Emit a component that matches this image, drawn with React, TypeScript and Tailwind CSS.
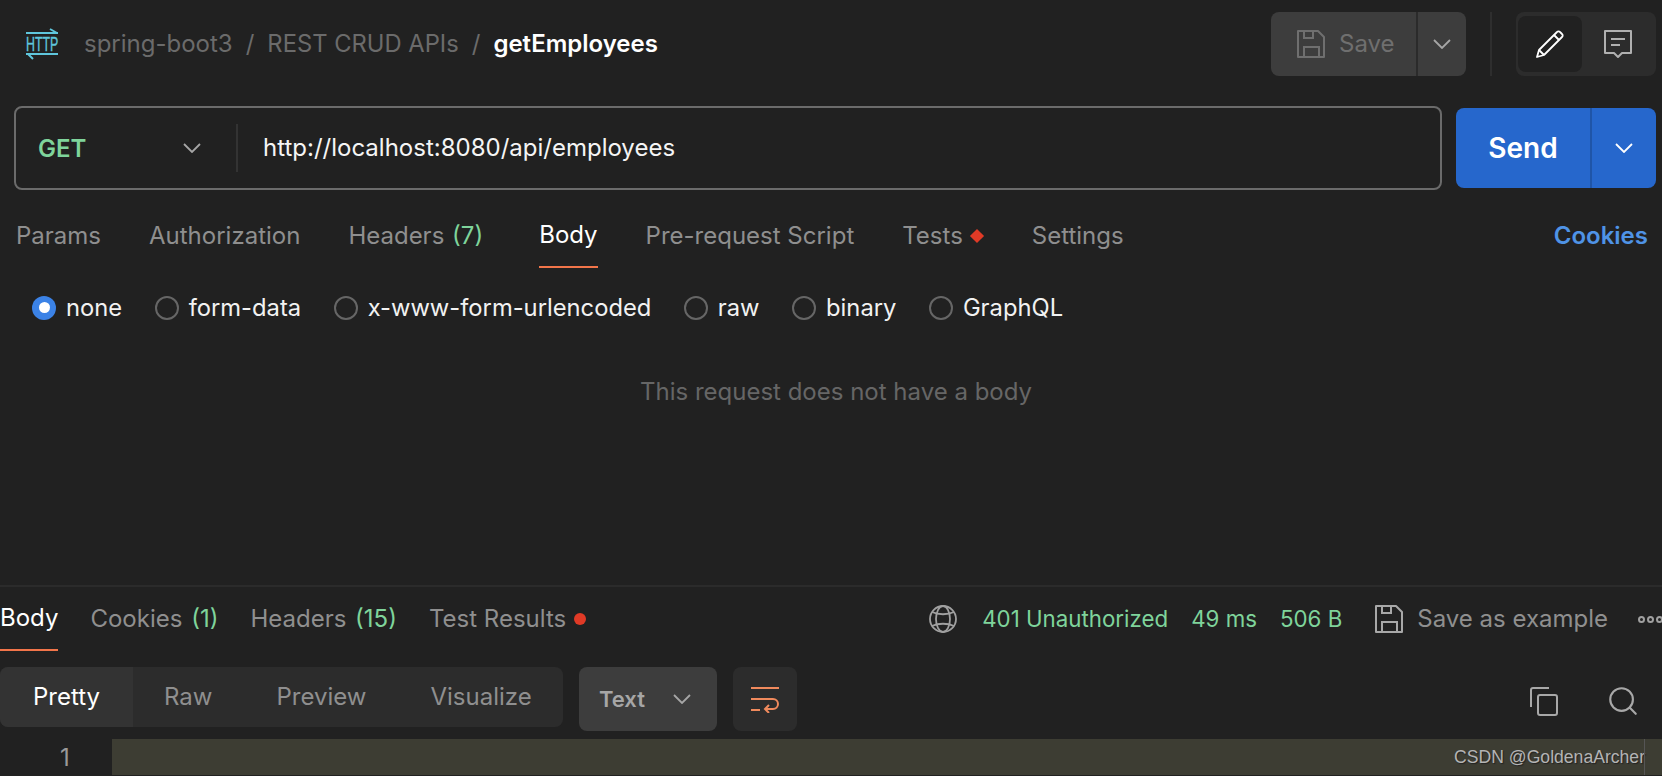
import { Search } from "lucide-react";

const font = { fontFamily: "Inter, 'Noto Sans', sans-serif" };

function HttpIcon() {
  return (
    <svg width="36" height="34" viewBox="0 0 36 34" fill="none" stroke="#5fc6dc" strokeWidth="2">
      <path d="M2 6h32M26 2l7 4" />
      <path d="M2 27h32M4 27l5 5" />
      <text transform="translate(2 24) scale(0.62 1)" fill="#5fc6dc" stroke="#5fc6dc" strokeWidth="0.4" fontSize="20" fontFamily="Liberation Sans, sans-serif">
        HTTP
      </text>
    </svg>
  );
}

function Chevron({ color = "#a6a6a6" }: { color?: string }) {
  return (
    <svg width="18" height="10" viewBox="0 0 18 10" fill="none" stroke={color} strokeWidth="1.8">
      <path d="M1 1l8 8 8-8" />
    </svg>
  );
}

function SaveIcon({ className }: { className?: string }) {
  return (
    <svg viewBox="0 0 28 28" fill="none" stroke="currentColor" strokeWidth="2" className={className}>
      <path d="M1 1h20l6 6v20H1z" strokeLinejoin="round" />
      <path d="M7 1v7h9V1M7 27V17h15v10" />
    </svg>
  );
}

function Radio({ label, on }: { label: string; on?: boolean }) {
  return (
    <label className="flex items-center gap-[10px] text-[23.75px] text-[#f2f2f2]">
      {on ? (
        <span className="flex h-[24px] w-[24px] items-center justify-center rounded-full bg-[#3b82e6]">
          <span className="h-[11px] w-[11px] rounded-full bg-white" />
        </span>
      ) : (
        <span className="h-[24px] w-[24px] rounded-full border-2 border-[#666666]" />
      )}
      {label}
    </label>
  );
}

export default function App() {
  return (
    <div style={font} className="flex h-[776px] w-[1662px] flex-col overflow-hidden bg-[#212121] text-[24px]">
      {/* Request pane */}
      <div className="flex h-[587px] shrink-0 flex-col border-b-2 border-[#2b2b2b]">
        {/* Breadcrumb */}
        <div className="flex items-start justify-between pl-[24px] pr-[6px] pt-[12px]">
          <div className="flex h-[64px] items-center">
            <HttpIcon />
            <span className="ml-[24px] text-[#6b6b6b]">spring-boot3</span>
            <span className="mx-[13px] text-[#6b6b6b]">/</span>
            <span className="text-[23.75px] text-[#6b6b6b]">REST CRUD APIs</span>
            <span className="mx-[13px] text-[#6b6b6b]">/</span>
            <span className="font-semibold text-white">getEmployees</span>
          </div>
          <div className="flex items-center">
            <div className="flex h-[64px] w-[195px] rounded-lg bg-[#3d3d3d]">
              <div className="flex w-[145px] items-center gap-[14px] pl-[26px] text-[#6f6f6f]">
                <SaveIcon className="h-[28px] w-[28px]" />
                Save
              </div>
              <div className="flex flex-1 items-center justify-center border-l-2 border-[#2b2b2b]">
                <Chevron />
              </div>
            </div>
            <div className="mx-[24px] h-[64px] w-[2px] bg-[#2e2e2e]" />
            <div className="flex h-[64px] w-[140px] items-center rounded-lg bg-[#2c2c2c] pl-[2px] pr-[2px]">
              <div className="flex h-[56px] w-[64px] items-center justify-center rounded-lg bg-[#212121]">
                <svg width="30" height="30" viewBox="0 0 30 30" fill="none" stroke="#ffffff" strokeWidth="1.8" strokeLinejoin="round">
                  <path d="M2 28l2-7L22 3a2 2 0 0 1 3 0l2 2a2 2 0 0 1 0 3L9 26z" />
                  <path d="M19 6l5 5M4 21l5 5" />
                </svg>
              </div>
              <div className="flex flex-1 items-center justify-center">
                <svg width="30" height="30" viewBox="0 0 30 30" fill="none" stroke="#b0b0b0" strokeWidth="2">
                  <path d="M2 2h26v22H19l-4 4-4-4H2z" strokeLinejoin="round" />
                  <path d="M8 10h14M8 16h9" />
                </svg>
              </div>
            </div>
          </div>
        </div>

        {/* URL bar */}
        <div className="mt-[30px] flex items-center gap-[14px] pl-[14px] pr-[6px]">
          <div className="flex h-[84px] w-[1428px] items-center rounded-lg border-2 border-[#6b6b6b]">
            <div className="flex w-[220px] items-center justify-between pl-[22px] pr-[35px]">
              <span className="pt-[1px] font-semibold text-[#7fd49b]">GET</span>
              <Chevron />
            </div>
            <div className="h-[48px] w-[2px] bg-[#333333]" />
            <span className="ml-[25px] text-[#f5f5f5]">http://localhost:8080/api/employees</span>
          </div>
          <div className="flex h-[80px] w-[200px] rounded-lg bg-[#2667cc] text-white">
            <div className="flex w-[134px] items-center justify-center text-[28px] font-semibold">Send</div>
            <div className="flex flex-1 items-center justify-center border-l-2 border-[#1f55a8]">
              <Chevron color="#ffffff" />
            </div>
          </div>
        </div>

        {/* Request tabs */}
        <div className="flex h-[78px] items-center justify-between pl-[16px] pr-[14px] pt-[14px] text-[#8f8f8f]">
          <div className="flex h-full items-center gap-[48px]">
            <span>Params</span>
            <span>Authorization</span>
            <span>
              Headers <span className="ml-[1px] text-[#7fd49b]">(7)</span>
            </span>
            <span className="ml-[8px] flex h-full items-center border-b-2 border-[#f2754a] text-white">Body</span>
            <span>Pre-request Script</span>
            <span className="flex items-center gap-[9px]">
              Tests
              <span className="h-[10px] w-[10px] rotate-45 bg-[#e03a26]" />
            </span>
            <span className="ml-[2px]">Settings</span>
          </div>
          <span className="font-semibold text-[#4f93e6]">Cookies</span>
        </div>

        {/* Body type */}
        <div className="mt-[22px] flex items-center gap-[32.5px] pl-[32px]">
          <Radio label="none" on />
          <Radio label="form-data" />
          <Radio label="x-www-form-urlencoded" />
          <Radio label="raw" />
          <Radio label="binary" />
          <Radio label="GraphQL" />
        </div>
        <p className="mt-[48px] pl-[10px] text-center text-[#666666]">This request does not have a body</p>
      </div>

      {/* Response tabs */}
      <div className="flex h-[64px] shrink-0 items-center justify-between text-[#8f8f8f]">
        <div className="flex h-full items-center gap-[32px]">
          <span className="flex h-full items-center border-b-2 border-[#f2754a] text-white">Body</span>
          <span>
            Cookies <span className="ml-[2px] text-[#7fd49b]">(1)</span>
          </span>
          <span>
            Headers <span className="ml-[2px] text-[#7fd49b]">(15)</span>
          </span>
          <span className="flex items-center gap-[8px]">
            Test Results
            <span className="h-[12px] w-[12px] rounded-full bg-[#e03a26]" />
          </span>
        </div>
        <div className="flex items-center">
          <svg width="30" height="30" viewBox="0 0 30 30" fill="none" stroke="#a0a0a0" strokeWidth="1.8">
            <circle cx="15" cy="15" r="13" />
            <ellipse cx="15" cy="15" rx="7" ry="13" />
            <path d="M4 8c6 3 16 3 22 0M4 22c6-3 16-3 22 0" />
          </svg>
          <span className="ml-[24px] text-[22.3px] text-[#7fd49b]">401 Unauthorized</span>
          <span className="ml-[23px] text-[22.3px] text-[#7fd49b]">49 ms</span>
          <span className="ml-[23px] text-[22.3px] text-[#7fd49b]">506 B</span>
          <SaveIcon className="ml-[33px] h-[28px] w-[28px] text-[#a8a8a8]" />
          <span className="ml-[14px]">Save as example</span>
          <div className="ml-[30px] flex w-[24px] gap-[2px] overflow-hidden">
            <span className="h-[7px] w-[7px] shrink-0 rounded-full border-2 border-[#a0a0a0]" />
            <span className="h-[7px] w-[7px] shrink-0 rounded-full border-2 border-[#a0a0a0]" />
            <span className="h-[7px] w-[7px] shrink-0 rounded-full border-2 border-[#a0a0a0]" />
          </div>
        </div>
      </div>

      {/* Response toolbar */}
      <div className="mt-[16px] flex items-start justify-between pr-[22px]">
        <div className="flex items-start gap-[16px]">
          <div className="flex h-[60px] w-[563px] items-center rounded-lg bg-[#2c2c2c] text-[#8f8f8f]">
            <span className="flex h-full w-[133px] items-center justify-center rounded-l-lg bg-[#333333] text-white">Pretty</span>
            <span className="ml-[31px]">Raw</span>
            <span className="ml-[64px]">Preview</span>
            <span className="ml-[64px]">Visualize</span>
          </div>
          <div className="flex h-[64px] w-[138px] items-center justify-between rounded-lg bg-[#3d3d3d] pl-[20px] pr-[26px] text-[22px] font-semibold text-[#a6a6a6]">
            Text
            <Chevron />
          </div>
          <div className="flex h-[64px] w-[64px] items-center justify-center rounded-lg bg-[#2c2c2c]">
            <svg width="30" height="28" viewBox="0 0 30 28" fill="none" stroke="#f08a5d" strokeWidth="2">
              <path d="M1 3h28M1 14h22a5 5 0 0 1 0 10h-8M19 20l-4 4 4 4M1 25h9" />
            </svg>
          </div>
        </div>
        <div className="flex items-center gap-[47px] pt-[17px]">
          <svg width="30" height="30" viewBox="0 0 30 30" fill="none" stroke="#a8a8a8" strokeWidth="2" strokeLinejoin="round">
            <path d="M20 2H4a2 2 0 0 0-2 2v17" />
            <rect x="9" y="9" width="19" height="20" rx="2" />
          </svg>
          <Search size={34} strokeWidth={1.5} color="#a8a8a8" />
        </div>
      </div>

      {/* Editor */}
      <div className="mt-[8px] flex h-[36px] shrink-0">
        <span className="flex w-[112px] items-center justify-center pl-[18px] pt-[2px] text-[#9a9a9a]">1</span>
        <div className="flex flex-1 items-center justify-end bg-[#3d3d33]">
          <span className="pt-[1px] font-['Liberation_Sans'] text-[17.6px] text-[#b4b4b4] [text-shadow:1px_1px_1px_#222222]">CSDN @GoldenaArcher</span>
          <div className="-ml-[1px] h-full w-[18px] border-l border-[#555555]" />
        </div>
      </div>
    </div>
  );
}
